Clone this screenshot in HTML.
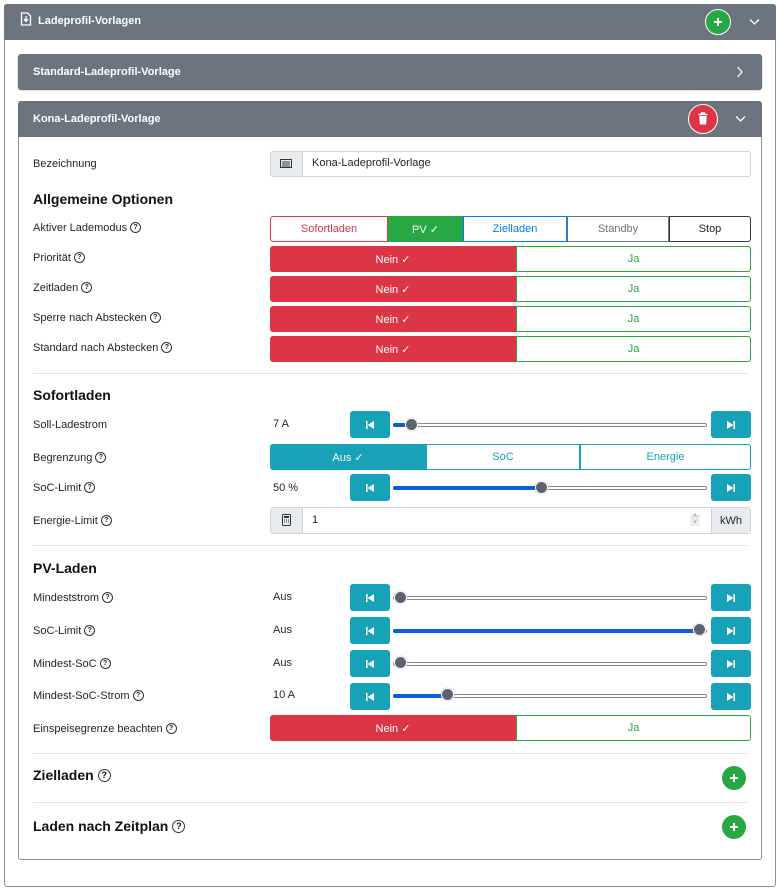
<!DOCTYPE html>
<html><head><meta charset="utf-8"><style>
*{box-sizing:border-box;margin:0;padding:0}
body{width:780px;height:890px;background:#fff;font-family:"Liberation Sans",sans-serif;font-size:11px;color:#212529;position:relative;overflow:hidden}
.a{position:absolute}
.hdr{background:#6c757d;color:#fff;font-weight:bold;font-size:11px}
.lbl{position:absolute;left:33px;font-size:11px;color:#212529;line-height:14px}
.q{display:inline-block;width:11px;height:11px;border:1px solid #333;border-radius:50%;font-size:7px;line-height:9px;text-align:center;vertical-align:middle;margin-left:3px;margin-top:-2px;font-weight:bold}
.h{position:absolute;left:33px;font-weight:bold;font-size:14px;color:#111}
.h .q{width:13px;height:13px;font-size:9px;line-height:11px;margin-left:4px}
.bg{position:absolute;display:flex;left:270px;width:481px;height:26px}
.bg div{display:flex;align-items:center;justify-content:center;font-size:11px;height:100%}
.nein{background:#dc3545;color:#fff;width:246px;border-radius:3px 0 0 3px}
.ja{flex:1;border:1px solid #28a745;color:#28a745;border-radius:0 3px 3px 0}
.btn{position:absolute;width:40px;height:27px;background:#17a2b8;border-radius:3px;display:flex;align-items:center;justify-content:center}
.trk{position:absolute;left:393px;width:314px;height:4px;border:1px solid #8a8a8a;border-radius:2px;background:#fff}
.fill{position:absolute;left:393px;height:4px;background:#0b5fd8;border-radius:2px}
.th{position:absolute;width:13px;height:13px;border-radius:50%;background:#5c6370;border:1px solid #fff;box-shadow:0 0 1px #888}
.hr{position:absolute;left:33px;width:714px;height:1px;background:#e3e3e3}
.val{position:absolute;left:273px;font-size:11px}
.plus{position:absolute;width:24px;height:24px;border-radius:50%;background:#28a745}
.plus:before,.plus:after{content:"";position:absolute;background:#fff;left:50%;top:50%}
.plus:before{width:8px;height:1.4px;margin:-0.7px 0 0 -4px}
.plus:after{width:1.4px;height:8px;margin:-4px 0 0 -0.7px}
</style></head><body>
<svg width="0" height="0" style="position:absolute"><defs>
<symbol id="pv" viewBox="0 0 8 8"><rect x="0" y="0" width="1.6" height="8" fill="#fff"/><path d="M8 0v8L1.6 4z" fill="#fff"/></symbol>
<symbol id="nx" viewBox="0 0 8 8"><rect x="6.4" y="0" width="1.6" height="8" fill="#fff"/><path d="M0 0v8l6.4-4z" fill="#fff"/></symbol>
</defs></svg>
<!-- outer card -->
<div class="a" style="left:4px;top:4px;width:772px;height:883px;border:1px solid #8a8f94;border-radius:3px"></div>
<div class="a hdr" style="left:4px;top:4px;width:772px;height:36px;border-radius:3px 3px 0 0"></div>
<svg class="a" style="left:20px;top:12px" width="12" height="14" viewBox="0 0 12 14"><path d="M1.5 1h6l3 3v9h-9z" fill="none" stroke="#fff" stroke-width="1.3"/><path d="M6 4v5M4 7l2 2.5 2-2.5" stroke="#fff" fill="none" stroke-width="1.3"/></svg>
<div class="a" style="left:38px;top:15px;color:#fff;font-weight:bold;font-size:11px">Ladeprofil-Vorlagen</div>
<div class="plus" style="left:705px;top:9px;width:26px;height:26px;border:1px solid #fff"></div>
<svg class="a" style="left:749px;top:18px" width="11" height="8"><path d="M1 1.5l4.5 4.5 4.5-4.5" stroke="#fff" fill="none" stroke-width="1.3"/></svg>

<!-- standard card -->
<div class="a hdr" style="left:18px;top:54px;width:744px;height:35px;border-radius:3px;box-shadow:0 1px 1px #555"></div>
<div class="a" style="left:33px;top:66px;color:#fff;font-weight:bold;font-size:11px">Standard-Ladeprofil-Vorlage</div>
<svg class="a" style="left:736px;top:66px" width="8" height="12"><path d="M1.5 1l4.5 5-4.5 5" stroke="#fff" fill="none" stroke-width="1.3"/></svg>

<!-- kona card -->
<div class="a" style="left:18px;top:101px;width:744px;height:759px;border:1px solid #8a8f94;border-radius:3px"></div>
<div class="a hdr" style="left:18px;top:101px;width:744px;height:36px;border-radius:3px 3px 0 0"></div>
<div class="a" style="left:33px;top:113px;color:#fff;font-weight:bold;font-size:11px">Kona-Ladeprofil-Vorlage</div>
<div class="a" style="left:688px;top:104px;width:30px;height:30px;border-radius:50%;background:#dc3545;border:1px solid #fff"></div>
<svg class="a" style="left:698px;top:112px" width="10" height="13"><path d="M0.5 2.5h9M3.5 2.5V1h3v1.5" stroke="#fff" stroke-width="1.4" fill="none"/><path d="M1.3 4h7.4l-.6 8.5H1.9z" fill="#fff"/></svg>
<svg class="a" style="left:735px;top:115px" width="11" height="8"><path d="M1 1.5l4.5 4.5 4.5-4.5" stroke="#fff" fill="none" stroke-width="1.3"/></svg>

<!-- Bezeichnung -->
<div class="lbl" style="top:157px">Bezeichnung</div>
<div class="a" style="left:270px;top:151px;width:481px;height:26px;border:1px solid #ced4da;border-radius:3px"></div>
<div class="a" style="left:271px;top:152px;width:32px;height:24px;background:#e9ecef;border-right:1px solid #ced4da"></div>
<svg class="a" style="left:280px;top:159px" width="12" height="9"><rect x=".5" y=".5" width="11" height="8" fill="none" stroke="#333"/><path d="M2 3h8M2 5h8M2 7h8" stroke="#333"/></svg>
<div class="a" style="left:312px;top:157px">Kona-Ladeprofil-Vorlage</div>

<div class="h" style="top:191px">Allgemeine Optionen</div>
<div class="lbl" style="top:221px">Aktiver Lademodus<span class="q">?</span></div>
<div class="bg" style="top:216px">
<div style="width:118px;border:1px solid #dc3545;color:#dc3545;border-radius:3px 0 0 3px">Sofortladen</div>
<div style="width:75px;background:#28a745;color:#fff">PV ✓</div>
<div style="width:104px;border:1px solid #007bff;color:#007bff">Zielladen</div>
<div style="width:102px;border:1px solid #6c757d;color:#6c757d">Standby</div>
<div style="flex:1;border:1px solid #343a40;color:#212529;border-radius:0 3px 3px 0">Stop</div>
</div>
<div class="lbl" style="top:251px">Priorität<span class="q">?</span></div>
<div class="bg" style="top:246px"><div class="nein">Nein ✓</div><div class="ja">Ja</div></div>
<div class="lbl" style="top:281px">Zeitladen<span class="q">?</span></div>
<div class="bg" style="top:276px"><div class="nein">Nein ✓</div><div class="ja">Ja</div></div>
<div class="lbl" style="top:311px">Sperre nach Abstecken<span class="q">?</span></div>
<div class="bg" style="top:306px"><div class="nein">Nein ✓</div><div class="ja">Ja</div></div>
<div class="lbl" style="top:341px">Standard nach Abstecken<span class="q">?</span></div>
<div class="bg" style="top:336px"><div class="nein">Nein ✓</div><div class="ja">Ja</div></div>
<div class="hr" style="top:373px"></div>

<div class="h" style="top:387px">Sofortladen</div>
<div class="lbl" style="top:418px">Soll-Ladestrom</div>
<div class="val" style="top:418px">7 A</div>
<div class="btn" style="left:350px;top:411px"><svg width="8" height="8"><use href="#pv"/></svg></div>
<div class="trk" style="top:423px"></div><div class="fill" style="top:423px;width:14px"></div><div class="th" style="left:405px;top:418px"></div>
<div class="btn" style="left:711px;top:411px"><svg width="8" height="8"><use href="#nx"/></svg></div>

<div class="lbl" style="top:451px">Begrenzung<span class="q">?</span></div>
<div class="bg" style="top:444px">
<div style="width:156px;background:#17a2b8;color:#fff;border-radius:3px 0 0 3px">Aus ✓</div>
<div style="width:154px;border:1px solid #17a2b8;color:#17a2b8">SoC</div>
<div style="flex:1;border:1px solid #17a2b8;color:#17a2b8;border-radius:0 3px 3px 0">Energie</div>
</div>
<div class="lbl" style="top:481px">SoC-Limit<span class="q">?</span></div>
<div class="val" style="top:482px">50 %</div>
<div class="btn" style="left:350px;top:474px"><svg width="8" height="8"><use href="#pv"/></svg></div>
<div class="trk" style="top:486px"></div><div class="fill" style="top:486px;width:148px"></div><div class="th" style="left:535px;top:481px"></div>
<div class="btn" style="left:711px;top:474px"><svg width="8" height="8"><use href="#nx"/></svg></div>

<div class="lbl" style="top:514px">Energie-Limit<span class="q">?</span></div>
<div class="a" style="left:270px;top:507px;width:481px;height:27px;border:1px solid #ced4da;border-radius:3px"></div>
<div class="a" style="left:271px;top:508px;width:32px;height:25px;background:#e9ecef;border-right:1px solid #ced4da"></div>
<svg class="a" style="left:282px;top:514px" width="9" height="12"><rect x=".5" y=".5" width="8" height="11" rx="1" fill="none" stroke="#333"/><rect x="2" y="2" width="5" height="2" fill="#333"/><path d="M2 6h1M4 6h1M6 6h1M2 8h1M4 8h1M6 8h1" stroke="#333"/></svg>
<div class="a" style="left:312px;top:514px">1</div>
<div class="a" style="left:690px;top:514px;width:10px;height:12px;background:#eee;font-size:7px;color:#888;text-align:center;line-height:6px">˄<br>˅</div>
<div class="a" style="left:711px;top:508px;width:39px;height:25px;background:#e9ecef;border-left:1px solid #ced4da;display:flex;align-items:center;justify-content:center">kWh</div>
<div class="hr" style="top:545px"></div>

<div class="h" style="top:560px">PV-Laden</div>
<div class="lbl" style="top:591px">Mindeststrom<span class="q">?</span></div>
<div class="val" style="top:591px">Aus</div>
<div class="btn" style="left:350px;top:584px"><svg width="8" height="8"><use href="#pv"/></svg></div>
<div class="trk" style="top:596px"></div><div class="th" style="left:394px;top:591px"></div>
<div class="btn" style="left:711px;top:584px"><svg width="8" height="8"><use href="#nx"/></svg></div>

<div class="lbl" style="top:624px">SoC-Limit<span class="q">?</span></div>
<div class="val" style="top:624px">Aus</div>
<div class="btn" style="left:350px;top:617px"><svg width="8" height="8"><use href="#pv"/></svg></div>
<div class="trk" style="top:629px"></div><div class="fill" style="top:629px;width:310px"></div><div class="th" style="left:693px;top:623px"></div>
<div class="btn" style="left:711px;top:617px"><svg width="8" height="8"><use href="#nx"/></svg></div>

<div class="lbl" style="top:657px">Mindest-SoC<span class="q">?</span></div>
<div class="val" style="top:657px">Aus</div>
<div class="btn" style="left:350px;top:650px"><svg width="8" height="8"><use href="#pv"/></svg></div>
<div class="trk" style="top:662px"></div><div class="th" style="left:394px;top:656px"></div>
<div class="btn" style="left:711px;top:650px"><svg width="8" height="8"><use href="#nx"/></svg></div>

<div class="lbl" style="top:689px">Mindest-SoC-Strom<span class="q">?</span></div>
<div class="val" style="top:689px">10 A</div>
<div class="btn" style="left:350px;top:683px"><svg width="8" height="8"><use href="#pv"/></svg></div>
<div class="trk" style="top:694px"></div><div class="fill" style="top:694px;width:54px"></div><div class="th" style="left:441px;top:688px"></div>
<div class="btn" style="left:711px;top:683px"><svg width="8" height="8"><use href="#nx"/></svg></div>

<div class="lbl" style="top:722px">Einspeisegrenze beachten<span class="q">?</span></div>
<div class="bg" style="top:715px"><div class="nein">Nein ✓</div><div class="ja">Ja</div></div>
<div class="hr" style="top:753px"></div>

<div class="h" style="top:767px">Zielladen<span class="q">?</span></div>
<div class="plus" style="left:722px;top:766px"></div>
<div class="hr" style="top:802px"></div>
<div class="h" style="top:818px">Laden nach Zeitplan<span class="q">?</span></div>
<div class="plus" style="left:722px;top:815px"></div>
</body></html>
